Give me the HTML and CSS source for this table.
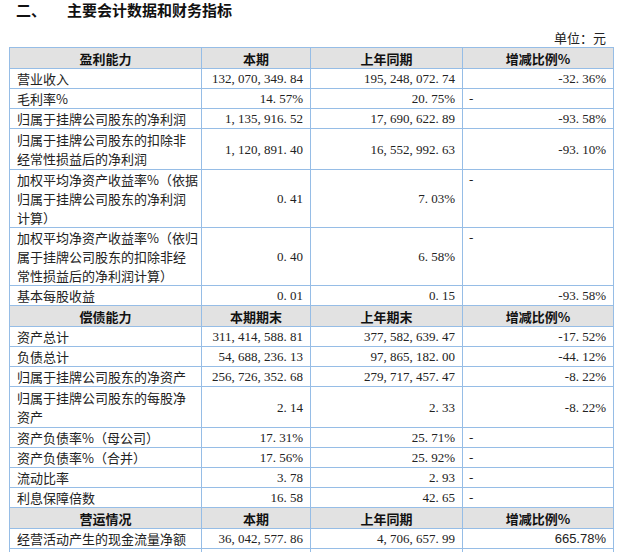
FILE: index.html
```html
<!DOCTYPE html>
<html lang="zh-CN">
<head>
<meta charset="utf-8">
<title>主要会计数据和财务指标</title>
<link rel="stylesheet" href="styles.css">
</head>
<body>
<div class="page">
  <h2 class="title"><span class="num">二、</span><span class="text">主要会计数据和财务指标</span></h2>
  <div class="unit">单位：元</div>
  <table class="fin">
    <colgroup><col class="c1"><col class="c2"><col class="c3"><col class="c4"></colgroup>
    <tbody>
      <tr class="head"><th>盈利能力</th><th>本期</th><th>上年同期</th><th>增减比例%</th></tr>
      <tr><td class="lbl">营业收入</td><td class="n">132, 070, 349. 84</td><td class="n">195, 248, 072. 74</td><td class="n">-32. 36%</td></tr>
      <tr><td class="lbl">毛利率%</td><td class="n">14. 57%</td><td class="n">20. 75%</td><td class="d">-</td></tr>
      <tr><td class="lbl">归属于挂牌公司股东的净利润</td><td class="n">1, 135, 916. 52</td><td class="n">17, 690, 622. 89</td><td class="n">-93. 58%</td></tr>
      <tr class="multi"><td class="lbl">归属于挂牌公司股东的扣除非<br>经常性损益后的净利润</td><td class="n">1, 120, 891. 40</td><td class="n">16, 552, 992. 63</td><td class="n">-93. 10%</td></tr>
      <tr class="multi3"><td class="lbl">加权平均净资产收益率%（依据<br>归属于挂牌公司股东的净利润<br>计算）</td><td class="n">0. 41</td><td class="n">7. 03%</td><td class="d top">-</td></tr>
      <tr class="multi3"><td class="lbl">加权平均净资产收益率%（依归<br>属于挂牌公司股东的扣除非经<br>常性损益后的净利润计算）</td><td class="n">0. 40</td><td class="n">6. 58%</td><td class="d top">-</td></tr>
      <tr><td class="lbl">基本每股收益</td><td class="n">0. 01</td><td class="n">0. 15</td><td class="n">-93. 58%</td></tr>
      <tr class="head"><th>偿债能力</th><th>本期期末</th><th>上年期末</th><th>增减比例%</th></tr>
      <tr><td class="lbl">资产总计</td><td class="n">311, 414, 588. 81</td><td class="n">377, 582, 639. 47</td><td class="n">-17. 52%</td></tr>
      <tr><td class="lbl">负债总计</td><td class="n">54, 688, 236. 13</td><td class="n">97, 865, 182. 00</td><td class="n">-44. 12%</td></tr>
      <tr><td class="lbl">归属于挂牌公司股东的净资产</td><td class="n">256, 726, 352. 68</td><td class="n">279, 717, 457. 47</td><td class="n">-8. 22%</td></tr>
      <tr class="multi"><td class="lbl">归属于挂牌公司股东的每股净<br>资产</td><td class="n">2. 14</td><td class="n">2. 33</td><td class="n">-8. 22%</td></tr>
      <tr><td class="lbl">资产负债率%（母公司）</td><td class="n">17. 31%</td><td class="n">25. 71%</td><td class="d">-</td></tr>
      <tr><td class="lbl">资产负债率%（合并）</td><td class="n">17. 56%</td><td class="n">25. 92%</td><td class="d">-</td></tr>
      <tr><td class="lbl">流动比率</td><td class="n">3. 78</td><td class="n">2. 93</td><td class="d">-</td></tr>
      <tr><td class="lbl">利息保障倍数</td><td class="n">16. 58</td><td class="n">42. 65</td><td class="d">-</td></tr>
      <tr class="head"><th>营运情况</th><th>本期</th><th>上年同期</th><th>增减比例%</th></tr>
      <tr><td class="lbl">经营活动产生的现金流量净额</td><td class="n">36, 042, 577. 86</td><td class="n">4, 706, 657. 99</td><td class="n sans">665.78%</td></tr>
      <tr class="blank"><td></td><td></td><td></td><td></td></tr>
    </tbody>
  </table>
</div>
</body>
</html>
```

FILE: styles.css
```css
html, body {
  margin: 0;
  padding: 0;
  background: #ffffff;
}

body {
  color: #1e1e1e;
  font-family: "Noto Sans CJK SC", sans-serif;
}

.page {
  padding: 0 9px;
  width: 604px;
}

.title {
  margin: 0;
  padding-left: 7px;
  height: 20px;
  font-size: 15px;
  line-height: 20px;
  font-weight: 600;
  color: #111;
}

.title .num {
  display: inline-block;
  margin-right: 21px;
}

.unit {
  margin-top: 8px;
  height: 19px;
  line-height: 19px;
  font-size: 13px;
  text-align: right;
  padding-right: 7px;
  color: #222;
}

.fin {
  border-collapse: collapse;
  table-layout: fixed;
  width: 604px;
}

.fin col.c1 { width: 192px; }
.fin col.c2 { width: 109px; }
.fin col.c3 { width: 152px; }
.fin col.c4 { width: 151px; }

.fin th,
.fin td {
  border: 1px solid #96bde6;
  padding: 0 7px;
  font-size: 13px;
  line-height: 19px;
  vertical-align: middle;
}

.fin tr.head th {
  background: #e2e2e2;
  font-weight: 700;
  text-align: center;
  padding-top: 1px;
  color: #111;
}

.fin tr.multi td {
  padding-top: 1px;
  padding-bottom: 1px;
}

.fin td.lbl {
  text-align: left;
  color: #222;
  padding-right: 2px;
  white-space: nowrap;
}

.fin td.n {
  text-align: right;
  white-space: nowrap;
  font-family: "Liberation Serif", "Noto Sans CJK SC", serif;
  font-size: 13px;
  color: #222;
  padding-left: 2px;
}

.fin td.n.sans {
  font-family: "Liberation Sans", Arial, sans-serif;
  font-size: 13px;
}

.fin td.d {
  text-align: left;
  font-family: "Liberation Serif", serif;
  padding-left: 6px;
}

.fin td.d.top {
  vertical-align: top;
}

.fin tr.blank td {
  height: 19px;
}
```
